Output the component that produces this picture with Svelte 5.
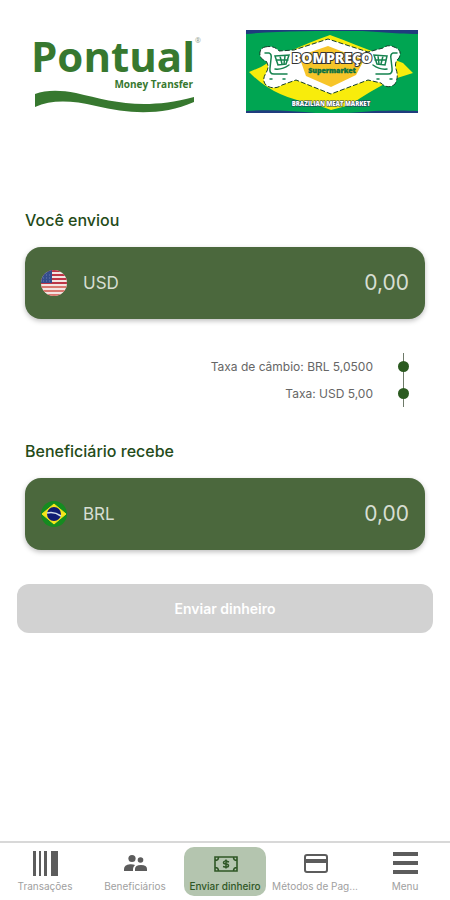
<script>
  let sent = $state('0,00');
  let received = $state('0,00');
  let active = $state('send');
  const tabs = [
    { id: 'history', label: 'Transações' },
    { id: 'people', label: 'Beneficiários' },
    { id: 'send', label: 'Enviar dinheiro' },
    { id: 'card', label: 'Métodos de Pag...' },
    { id: 'menu', label: 'Menu' }
  ];
  const rates = ['Taxa de câmbio: BRL 5,0500', 'Taxa: USD 5,00'];
</script>

<div class="page">
  <header>
    <svg class="logo" viewBox="0 0 172 84" role="img" aria-label="Pontual Money Transfer">
      <g fill="#37782f" font-family="'Open Sans', sans-serif" font-weight="700">
        <text x="5" y="42" font-size="42">Pontual</text>
        <text x="167" y="58" font-size="10" text-anchor="end">Money Transfer</text>
        <text x="169" y="13" font-size="7" font-weight="400" fill="#8b9a88">®</text>
        <path d="M9 64C20 60 34 60 50 63C84 71 116 81 168 67V72C136 86 103 84 70 76C44 70 25 70 9 77Z" />
      </g>
    </svg>
    <svg class="partner" viewBox="0 0 172 83" role="img" aria-label="Bompreço Supermarket">
      <rect width="172" height="83" fill="#00a552" />
      <path d="M0 0H172V4C145 4 132 1 108 1C72 1 30 1 0 4Z" fill="#203c7e" />
      <path d="M0 83V81C26 79 48 81 70 83ZM102 83C130 80 158 80 172 81V83Z" fill="#203c7e" />
      <path d="M3 42L15 37Q42 20 84 5Q98 10 110 15L157 33L167 43L148 49Q124 61 104 75L85 80L66 73Q28 68 3 42Z" fill="#f8ec0c" />
      <path d="M19 17Q28 15 33 21L48 20L82 9L122 22L137 18Q142 14 148 17Q157 20 153 28Q148 32 150 39Q153 47 149 54Q142 60 135 53L122 50L85 64L50 50L36 55Q29 60 21 56Q15 51 20 43Q24 36 20 31Q13 29 14 22Q15 18 19 17Z" fill="#fff" stroke="#153e29" stroke-width="1" stroke-dasharray="5 2" />
      <path d="M53 26L82 16L118 30L110 45L85 57L60 46Z" fill="#f7c529" />
      <g fill="none" stroke="#16834f" stroke-width="1.500" stroke-linecap="round">
        <path d="M19 23H23Q26 24 25 29L24 38Q23 44 28 44H41M29 39Q36 40 43 35M24 49H26M37 49H39" />
        <path d="M151 23H147Q144 24 145 29L146 38Q147 44 142 44H130M141 39Q134 40 127 35M146 49H144M133 49H131" />
        <path d="M29 26L43 25L40 34L32 35ZM30 30H42M34 26L36 34M39 26L38 34M141 26L128 25L131 34L139 35ZM140 30H129M137 26L135 34M132 26L133 34" />
      </g>
      <g font-family="'Open Sans', sans-serif" font-weight="800" text-anchor="middle">
        <text x="86" y="33" font-size="14" fill="#fff" stroke="#333" stroke-width="2" paint-order="stroke">BOMPREÇO</text>
        <text x="86" y="43" font-size="7" fill="#087044" stroke="#087044" stroke-width=".4">Supermarket</text>
        <text x="85" y="76" font-size="6" fill="#fff" stroke="#263a56" stroke-width="1" paint-order="stroke">BRAZILIAN MEAT MARKET</text>
      </g>
    </svg>
  </header>

  <main>
    <label class="title" for="sent">Você enviou</label>
    <div class="amount">
      <svg class="flag" viewBox="0 0 26 26" aria-hidden="true">
        <defs><clipPath id="us"><circle cx="13" cy="13" r="13" /></clipPath></defs>
        <g clip-path="url(#us)">
          <rect width="26" height="26" fill="#f3e5e2" />
          <path d="M0 1H26M0 5H26M0 9H26M0 13H26" stroke="#bd3546" stroke-width="2" />
          <path d="M0 17H26M0 21H26M0 25H26" stroke="#d9776f" stroke-width="2" />
          <path d="M0 0H11V13H0Z" fill="#344d8c" />
          <path d="M2 5H10M2 8H10M2 11H10" stroke="#6d7fb0" stroke-width="1" stroke-dasharray="1 2" />
        </g>
      </svg>
      <span class="code">USD</span>
      <input id="sent" inputmode="decimal" bind:value={sent} />
    </div>

    <ul class="rates">
      {#each rates as rate}
        <li>{rate}<i></i></li>
      {/each}
    </ul>

    <label class="title" for="received">Beneficiário recebe</label>
    <div class="amount">
      <svg class="flag" viewBox="0 0 26 26" aria-hidden="true">
        <circle cx="13" cy="13" r="13" fill="#158b20" />
        <path d="M1 13L13 3L25 13L13 23Z" fill="#f6e51b" stroke="#f6e51b" stroke-width="1" stroke-linejoin="round" />
        <circle cx="13" cy="13" r="7" fill="#101b73" />
        <path d="M6 12Q13 10 20 15" fill="none" stroke="#d3dcec" stroke-width="1.6" />
      </svg>
      <span class="code">BRL</span>
      <input id="received" inputmode="decimal" bind:value={received} />
    </div>

    <button class="submit" disabled>Enviar dinheiro</button>
  </main>

  <nav>
    {#each tabs as tab}
      <button class="tab" class:active={active === tab.id} onclick={() => (active = tab.id)}>
        <svg viewBox="0 0 28 28" aria-hidden="true" fill="currentColor">
          {#if tab.id === 'history'}
            <path d="M2 2H5V27H2ZM8 2H10V27H8ZM13 2H16V27H13ZM20 2H27V27H20Z" />
          {:else if tab.id === 'people'}
            <circle cx="11" cy="9.500" r="3.600" /><circle cx="19.500" cy="11" r="2.800" />
            <path d="M3 22V20Q3 16 9 15.200Q12 15 14 16Q12 18 12 20V22ZM14 22V20Q14 16 20 16Q26 16 26 20V22Z" />
          {:else if tab.id === 'send'}
            <path fill="none" stroke="currentColor" stroke-width="1.600" d="M4 8H26V22H4ZM4 11.500Q7.500 11.500 7.500 8M22.500 8Q22.500 11.500 26 11.500M4 18.500Q7.500 18.500 7.500 22M22.500 22Q22.500 18.500 26 18.500" />
            <path fill="none" stroke="currentColor" stroke-width="1.500" d="M18 13Q12.500 11 12.500 13.500Q12.500 15 15 15T17.500 16.800Q17.500 19 12 17.500M15 10.500V19.500" />
          {:else if tab.id === 'card'}
            <rect x="4" y="6" width="22" height="17" rx="2" fill="none" stroke="currentColor" stroke-width="2" />
            <path d="M4 10H26V14H4Z" />
          {:else}
            <path d="M2 3H27V7H2ZM2 12H27V16H2ZM2 21H27V25H2Z" />
          {/if}
        </svg>
        <span>{tab.label}</span>
      </button>
    {/each}
  </nav>
</div>

<style>
  :global(body) { margin: 0; background: #fff; }
  .page { display: flex; flex-direction: column; min-height: 100vh; font-family: Inter, "Liberation Sans", sans-serif; }
  header { display: flex; justify-content: space-between; align-items: flex-start; padding: 30px 32px 0 26px; }
  .logo, .partner { display: block; overflow: visible; width: 172px; }
  .logo { height: 84px; }
  .partner { height: 83px; }
  main { flex: 1; display: flex; flex-direction: column; padding: 96px 25px 32px; }
  .title { color: #244b19; font-size: 16px; line-height: 20px; font-weight: 500; }
  .amount { display: flex; align-items: center; box-sizing: border-box; height: 72px; margin-top: 17px; padding: 0 16px; border-radius: 16px; background: #4b683d; box-shadow: 0 2px 5px rgb(0 0 0 / 25%); color: #d7ded3; }
  .flag { width: 26px; height: 26px; margin-right: 16px; flex: none; }
  .code { font-size: 17px; line-height: 24px; }
  .amount input { flex: 1; min-width: 0; padding: 0; border: 0; outline: 0; background: none; color: inherit; font: 21px/28px Inter, sans-serif; text-align: right; }
  .rates { position: relative; list-style: none; margin: 34px 16px 34px 0; padding: 0; color: #666; font-size: 12px; }
  .rates::before { content: ""; position: absolute; right: 5px; top: 0; bottom: 0; width: 1px; background: #6e7a69; }
  .rates li { display: flex; justify-content: flex-end; align-items: center; gap: 25px; height: 27px; }
  .rates i { position: relative; width: 11px; height: 11px; border-radius: 50%; background: #2b5a20; }
  .submit { height: 49px; margin: 34px -8px 0; border: 0; border-radius: 12px; background: #d2d2d2; color: #fff; font: 600 14px/20px Inter, sans-serif; }
  nav { display: grid; grid-template-columns: repeat(5, minmax(0, 1fr)); padding: 4px 0; border-top: 2px solid #d8d8d8; }
  .tab { display: flex; flex-direction: column; align-items: center; justify-content: space-between; height: 49px; margin: 0 4px; padding: 2px 0 3px; border: 0; border-radius: 10px; background: none; color: #5c5c5c; font: 10px/13px Inter, sans-serif; white-space: nowrap; cursor: pointer; }
  .tab svg { width: 28px; height: 28px; }
  .tab span { color: #a0a0a0; }
  .tab.active { background: #b4c5af; color: #2f5726; font-weight: 500; }
  .tab.active span { color: inherit; }
</style>
